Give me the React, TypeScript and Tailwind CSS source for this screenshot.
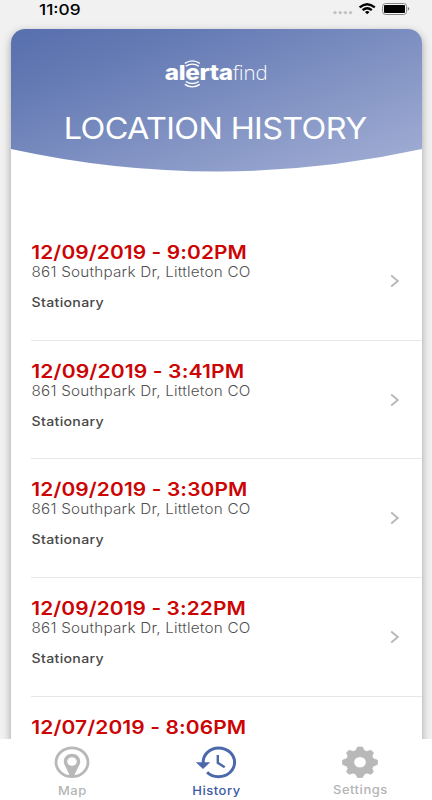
import React from 'react';

const address = '861 Southpark Dr, Littleton CO';
const status = 'Stationary';

type EntryData = { date: string; width: number; address?: string; status?: string };

const entries: EntryData[] = [
  { date: '12/09/2019 - 9:02PM', width: 215.7, address, status },
  { date: '12/09/2019 - 3:41PM', width: 213, address, status },
  { date: '12/09/2019 - 3:30PM', width: 216.2, address, status },
  { date: '12/09/2019 - 3:22PM', width: 214.6, address, status },
  { date: '12/07/2019 - 8:06PM', width: 215 },
];

function StatusBar() {
  return (
    <div className="flex h-[29px] items-start justify-between pl-[39px] pr-[22px]">
      <span className="mt-[-1px] origin-left scale-x-[1.15] text-[15px] font-[550] leading-[21px] text-black">11:09</span>
      <svg className="mt-[1px]" width="78" height="17" viewBox="332 1 78 17">
        <g fill="#c3c3c3">
          <circle cx="335" cy="12.6" r="1.7" />
          <circle cx="340.2" cy="12.6" r="1.7" />
          <circle cx="345.4" cy="12.6" r="1.7" />
          <circle cx="350.6" cy="12.6" r="1.7" />
        </g>
        <g fill="none" stroke="#000" strokeWidth="2.3">
          <path d="M359.6 7.4Q367.2 1 374.8 7.4" />
          <path d="M362.6 10.2Q367.2 6.4 371.8 10.2" />
        </g>
        <path d="M364.9 11.9Q367.2 10.2 369.5 11.9L367.2 14.2Z" />
        <rect x="382.6" y="3.5" width="24" height="11" rx="3" fill="#f8f8f8" stroke="#858585" />
        <rect x="384" y="5" width="21" height="8" rx="1" />
        <path d="M407.9 7v3.6q1.4-.5 1.4-1.8t-1.4-1.8Z" fill="#777" />
      </svg>
    </div>
  );
}

function Logo() {
  return (
    <svg className="block" width="110" height="34" viewBox="161 57 110 34" fill="#fff">
      <text x="164.8" y="79.6" fontFamily="Inter" fontWeight="850" fontSize="20.5" letterSpacing="-0.3" textLength="68" lengthAdjust="spacingAndGlyphs">alerta</text>
      <text x="232.7" y="79.8" fontFamily="Open Sans" fontWeight="300" fontSize="20" textLength="35" lengthAdjust="spacingAndGlyphs">find</text>
      <g fill="none" stroke="#fff" strokeWidth="1.4">
        <path d="M184.8 63.3Q192.3 58.4 199.8 63.3" />
        <path d="M185.8 66.2Q192.3 62 198.8 66.2" />
        <path d="M185.8 81.5Q192.3 85.6 198.8 81.5" />
        <path d="M184.8 84.3Q192.3 89.4 199.8 84.3" />
      </g>
    </svg>
  );
}

function Header() {
  return (
    <header className="relative h-[193px] shrink-0">
      <svg className="absolute left-0 top-0 h-[143px] w-full" viewBox="0 0 411 143" preserveAspectRatio="none">
        <defs>
          <linearGradient id="sky" gradientUnits="userSpaceOnUse" x1="50" y1="-45" x2="155" y2="242">
            <stop offset="0" stopColor="#536aac" />
            <stop offset="0.28" stopColor="#647ab4" />
            <stop offset="1" stopColor="#a5b1d6" />
          </linearGradient>
        </defs>
        <path d="M0 0H411V120Q205.5 165 0 120Z" fill="url(#sky)" />
      </svg>
      <div className="relative flex flex-col items-center pt-[28px]">
        <Logo />
        <h1 className="mr-[1.4px] mt-[16px] scale-x-[1.08] whitespace-nowrap text-[30px] font-[370] leading-[42px] tracking-[-0.6px] text-white">LOCATION HISTORY</h1>
      </div>
    </header>
  );
}

function Entry({ date, width, address, status }: EntryData) {
  return (
    <li className="flex h-[118.67px] shrink-0 items-start justify-between border-b border-[#e6e6e6] pt-[19px]">
      <div className="flex flex-col">
        <svg className="block h-[22px] w-[230px] overflow-visible" fill="#cc0404">
          <text x="0.3" y="18.2" fontFamily="Inter" fontWeight="630" fontSize="18.8" letterSpacing="0.1" textLength={width} lengthAdjust="spacingAndGlyphs">{date}</text>
        </svg>
        {address && (
          <svg className="block h-[20px] w-[230px] overflow-visible" fill="#505050">
            <text x="0.5" y="14.4" fontFamily="Inter" fontWeight="340" fontSize="14" letterSpacing="0.2" textLength="219" lengthAdjust="spacingAndGlyphs">{address}</text>
          </svg>
        )}
        {status && (
          <svg className="mt-[8px] block h-[20px] w-[230px] overflow-visible" fill="#484848">
            <text x="0.5" y="15.7" fontFamily="Inter" fontWeight="550" fontSize="12.8" letterSpacing="0.3" textLength="72.5" lengthAdjust="spacingAndGlyphs">{status}</text>
          </svg>
        )}
      </div>
      <svg className="mr-[22px] mt-[33px]" width="10" height="14" viewBox="0 0 10 14" fill="none" stroke="#b8b8b8" strokeWidth="1.9">
        <path d="M1.2 1.6L7.8 7L1.2 12.4" />
      </svg>
    </li>
  );
}

function MapIcon() {
  return (
    <svg width="38" height="34" viewBox="53 745 38 34">
      <ellipse cx="72" cy="762.3" rx="16" ry="14.4" fill="none" stroke="#b8b8b8" strokeWidth="2.8" />
      <path fill="#b8b8b8" fillRule="evenodd" d="M72 753.8C67.4 753.8 63.8 757.2 63.8 761.4C63.8 766 68.6 770.5 69.8 776.8H74.2C75.4 770.5 80.2 766 80.2 761.4C80.2 757.2 76.6 753.8 72 753.8ZM72 757.2A4.8 4.3 0 1 1 72 765.8A4.8 4.3 0 1 1 72 757.2Z" />
    </svg>
  );
}

function HistoryIcon() {
  return (
    <svg width="44" height="34" viewBox="194.5 745 44 34" fill="none" stroke="#4b68ad" strokeWidth="3">
      <path d="M203.7 763C203.2 754.6 210.4 747.9 219 747.9C228 747.9 235.1 754.3 235.1 762.3C235.1 770.3 228 776.7 219 776.7C214.3 776.7 210.3 775.1 207.6 772.3" />
      <path d="M196.3 762.3H210.8L203.5 769Z" fill="#4b68ad" stroke="none" />
      <path d="M218.3 755V762.8L225.2 767.3" strokeWidth="2.4" />
    </svg>
  );
}

function GearIcon() {
  return (
    <svg width="38" height="34" viewBox="341 745 38 34">
      <g fill="#b8b8b8" transform="translate(360 762.3) scale(1.12 1)">
        <path fillRule="evenodd" d="M-2.1 -15.2H2.1L3.9 -11.6L6.2 -10.7L9.6 -12L12 -9.6L10.7 -6.2L11.6 -3.9L15.5 -2.1V2.1L11.6 3.9L10.7 6.2L12 9.6L9.6 12L6.2 10.7L3.9 11.6L2.1 15.2H-2.1L-3.9 11.6L-6.2 10.7L-9.6 12L-12 9.6L-10.7 6.2L-11.6 3.9L-15.5 2.1V-2.1L-11.6 -3.9L-10.7 -6.2L-12 -9.6L-9.6 -12L-6.2 -10.7L-3.9 -11.6ZM0 -5.6A5.6 5.6 0 1 0 0 5.6A5.6 5.6 0 1 0 0 -5.6Z" stroke="#b8b8b8" strokeWidth=".8" strokeLinejoin="round" />
      </g>
    </svg>
  );
}

function TabBar() {
  return (
    <nav className="grid h-[61px] shrink-0 grid-cols-3 bg-white text-[12px] font-medium leading-[18px] tracking-[0.5px] text-[#b4b4b4]">
      <div className="flex flex-col items-center pt-[6px]"><MapIcon /><span className="mt-[3px] scale-x-[1.08]">Map</span></div>
      <div className="flex flex-col items-center pt-[6px] text-[#3d5aa5]"><HistoryIcon /><span className="mt-[3px] scale-x-[1.08]">History</span></div>
      <div className="flex flex-col items-center pt-[6px]"><GearIcon /><span className="mt-[2px] scale-x-[1.08]">Settings</span></div>
    </nav>
  );
}

export default function App() {
  return (
    <div className="flex h-[800px] w-[432px] flex-col overflow-hidden bg-[#f1f1f1] font-['Inter',sans-serif]">
      <StatusBar />
      <div className="flex min-h-0 flex-1 flex-col [clip-path:inset(-29px_0_0_0)]">
        <main className="-mb-[40px] ml-[10.5px] mr-[10px] flex min-h-0 flex-1 flex-col overflow-hidden rounded-[14px] bg-white shadow-[0_3px_9px_rgba(0,0,0,0.34)]">
          <Header />
          <ul className="flex flex-col pl-[20.9px]">
            {entries.map((entry) => <Entry key={entry.date} {...entry} />)}
          </ul>
        </main>
      </div>
      <TabBar />
    </div>
  );
}
